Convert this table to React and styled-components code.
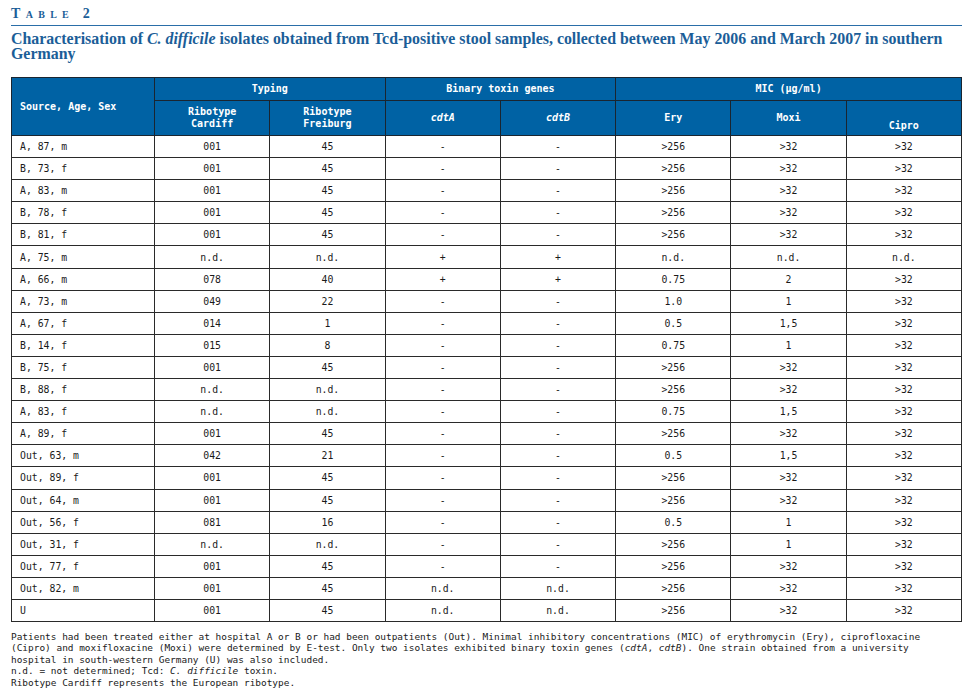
import React from "react";
import styled, { createGlobalStyle } from "styled-components";

const Global = createGlobalStyle`
  html, body { margin: 0; padding: 0; background: #ffffff; }
  body { font-family: "DejaVu Sans Mono", monospace; }
`;

const Page = styled.div`
  width: 951px;
  padding: 6px 11px 0 11px;
  display: flex;
  flex-direction: column;
`;

const Label = styled.div`
  font-family: "Liberation Serif", serif;
  font-weight: bold;
  color: #1b5e98;
  font-size: 14px;
  font-variant: small-caps;
  letter-spacing: 5.3px;
  line-height: 16px;
  padding-bottom: 3px;
  border-bottom: 1.5px solid #2a6ea8;
`;

const Title = styled.h1`
  margin: 5px 0 0 0;
  font-family: "Liberation Serif", serif;
  font-weight: bold;
  color: #1b5e98;
  font-size: 15.9px;
  line-height: 15px;
  width: 948px;
`;

const Table = styled.table`
  margin-top: 16px;
  width: 951px;
  border-collapse: collapse;
  table-layout: fixed;
  border: 1.5px solid #7c7c7c;
  font-family: "DejaVu Sans Mono", monospace;
`;

const HeadCell = styled.th`
  background: #0062a4;
  color: #ffffff;
  font-weight: bold;
  font-size: 10px;
  line-height: 12px;
  border: 1px solid #1a2530;
  text-align: ${(p) => (p.$left ? "left" : "center")};
  padding: ${(p) => (p.$low ? "16px 4px 0 4px" : p.$left ? "0 8px" : "0 4px")};
  font-style: ${(p) => (p.$italic ? "italic" : "normal")};
  height: ${(p) => p.$h || "auto"};
  vertical-align: middle;
`;

const Cell = styled.td`
  font-size: 9.8px;
  color: #1a1a1a;
  height: 21.1px;
  padding: 0 ${(p) => (p.$left ? "8px" : "4px")};
  text-align: ${(p) => (p.$left ? "left" : "center")};
  border: 1px solid #2a2a2a;
  white-space: nowrap;
`;

const Notes = styled.div`
  margin-top: 9px;
  width: 935px;
  font-family: "DejaVu Sans Mono", monospace;
  font-size: 9.45px;
  line-height: 11.4px;
  color: #1a1a1a;
  display: flex;
  flex-direction: column;
`;

const rows = [
  ["A, 87, m", "001", "45", "-", "-", ">256", ">32", ">32"],
  ["B, 73, f", "001", "45", "-", "-", ">256", ">32", ">32"],
  ["A, 83, m", "001", "45", "-", "-", ">256", ">32", ">32"],
  ["B, 78, f", "001", "45", "-", "-", ">256", ">32", ">32"],
  ["B, 81, f", "001", "45", "-", "-", ">256", ">32", ">32"],
  ["A, 75, m", "n.d.", "n.d.", "+", "+", "n.d.", "n.d.", "n.d."],
  ["A, 66, m", "078", "40", "+", "+", "0.75", "2", ">32"],
  ["A, 73, m", "049", "22", "-", "-", "1.0", "1", ">32"],
  ["A, 67, f", "014", "1", "-", "-", "0.5", "1,5", ">32"],
  ["B, 14, f", "015", "8", "-", "-", "0.75", "1", ">32"],
  ["B, 75, f", "001", "45", "-", "-", ">256", ">32", ">32"],
  ["B, 88, f", "n.d.", "n.d.", "-", "-", ">256", ">32", ">32"],
  ["A, 83, f", "n.d.", "n.d.", "-", "-", "0.75", "1,5", ">32"],
  ["A, 89, f", "001", "45", "-", "-", ">256", ">32", ">32"],
  ["Out, 63, m", "042", "21", "-", "-", "0.5", "1,5", ">32"],
  ["Out, 89, f", "001", "45", "-", "-", ">256", ">32", ">32"],
  ["Out, 64, m", "001", "45", "-", "-", ">256", ">32", ">32"],
  ["Out, 56, f", "081", "16", "-", "-", "0.5", "1", ">32"],
  ["Out, 31, f", "n.d.", "n.d.", "-", "-", ">256", "1", ">32"],
  ["Out, 77, f", "001", "45", "-", "-", ">256", ">32", ">32"],
  ["Out, 82, m", "001", "45", "n.d.", "n.d.", ">256", ">32", ">32"],
  ["U", "001", "45", "n.d.", "n.d.", ">256", ">32", ">32"],
];

export default function App() {
  return (
    <>
      <Global />
      <Page>
        <Label>Table 2</Label>
        <Title>
          Characterisation of <i>C. difficile</i> isolates obtained from Tcd-positive stool samples,
          collected between May 2006 and March 2007 in southern Germany
        </Title>
        <Table>
          <colgroup>
            <col style={{ width: "143px" }} />
            <col /><col /><col /><col /><col /><col /><col />
          </colgroup>
          <thead>
            <tr>
              <HeadCell rowSpan={2} $left>Source, Age, Sex</HeadCell>
              <HeadCell colSpan={2} $h="22px">Typing</HeadCell>
              <HeadCell colSpan={2}>Binary toxin genes</HeadCell>
              <HeadCell colSpan={3}>MIC (µg/ml)</HeadCell>
            </tr>
            <tr>
              <HeadCell $h="34px">Ribotype<br />Cardiff</HeadCell>
              <HeadCell>Ribotype<br />Freiburg</HeadCell>
              <HeadCell $italic>cdtA</HeadCell>
              <HeadCell $italic>cdtB</HeadCell>
              <HeadCell>Ery</HeadCell>
              <HeadCell>Moxi</HeadCell>
              <HeadCell $low>Cipro</HeadCell>
            </tr>
          </thead>
          <tbody>
            {rows.map((r, i) => (
              <tr key={i}>
                {r.map((v, j) => (
                  <Cell key={j} $left={j === 0}>{v}</Cell>
                ))}
              </tr>
            ))}
          </tbody>
        </Table>
        <Notes>
          <span>
            Patients had been treated either at hospital A or B or had been outpatients (Out). Minimal
            inhibitory concentrations (MIC) of erythromycin (Ery), ciprofloxacine (Cipro) and
            moxifloxacine (Moxi) were determined by E-test. Only two isolates exhibited binary toxin
            genes (<i>cdtA</i>, <i>cdtB</i>). One strain obtained from a university hospital in
            south-western Germany (U) was also included.
          </span>
          <span>
            n.d. = not determined; Tcd: <i>C. difficile</i> toxin.
          </span>
          <span>Ribotype Cardiff represents the European ribotype.</span>
        </Notes>
      </Page>
    </>
  );
}
